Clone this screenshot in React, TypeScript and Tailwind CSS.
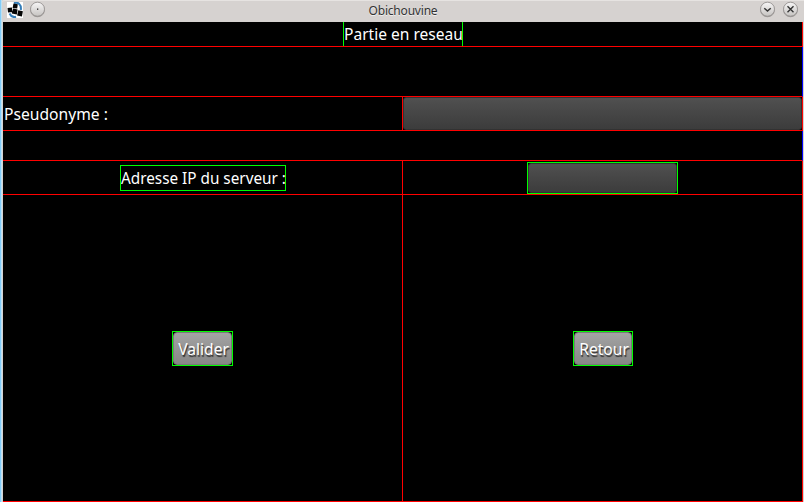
import type { ReactNode } from "react";

function Label({ children, className }: { children: ReactNode; className: string }) {
  return (
    <span className={`block w-max origin-left whitespace-nowrap text-[17px] leading-6 text-white ${className}`}>
      {children}
    </span>
  );
}

function TitleButton({ children }: { children: ReactNode }) {
  return (
    <svg width="17" height="18" viewBox="0 0 17 18" fill="none">
      <defs>
        <linearGradient id="knob" x1="0" y1="0" x2="0" y2="1">
          <stop offset="0" stopColor="#f7f6f6" />
          <stop offset="1" stopColor="#c6c3c1" />
        </linearGradient>
      </defs>
      <circle cx="8.5" cy="9.8" r="7.4" fill="#a09c9a" />
      <circle cx="8.5" cy="9.2" r="7" fill="url(#knob)" stroke="#918d8b" strokeWidth="0.8" />
      {children}
    </svg>
  );
}

function Logo() {
  return (
    <svg width="16" height="16" viewBox="0 0 16 16" className="bg-white">
      <path d="M7 1C11-.4 14.600 2.500 13.800 8" fill="none" stroke="#347db8" strokeWidth="2" />
      <path d="M2.500 11.500C4 14.500 6.500 15.500 9 14.800" fill="none" stroke="#347db8" strokeWidth="2" />
      <path d="M6.500 1.500l4.300.7-.6 4.300-4.600-.6zM.5 6l4.500-.4.4 4.300-4.400.6zM6.200 6.500l4.400.9-.8 5.100-5-1zM11.300 8.200l4.600 1-1 5.200-4.800-1z" fill="#050505" />
    </svg>
  );
}

function TitleBar() {
  return (
    <header className="flex h-[22px] items-start justify-between rounded-tl-[3px] border-t border-[#e6e3e1] bg-[#d6d2d0] pl-[5px] pr-[5px]">
      <div className="flex w-20 gap-[6px] pt-px">
        <Logo />
        <div className="-mt-[2px]">
          <TitleButton><rect x="8" y="8.500" width="1.300" height="1.300" fill="#222" /></TitleButton>
        </div>
      </div>
      <h1 className="pt-px font-['Noto_Sans','Open_Sans',sans-serif] text-[12px] leading-[17px] tracking-[-0.2px] text-[#333] [text-shadow:0_1px_0_#eee]">Obichouvine</h1>
      <div className="-mt-px flex w-20 justify-end gap-[6px]">
        <TitleButton><path d="M5.300 8.200l3.200 2.800 3.200-2.800" stroke="#333" strokeWidth="1.500" /></TitleButton>
        <TitleButton><path d="M5.500 6.200l6 6M11.500 6.200l-6 6" stroke="#333" strokeWidth="1.400" /></TitleButton>
      </div>
    </header>
  );
}

function Field({ className }: { className: string }) {
  return <input className={`block rounded-[3px] border border-[#323232] bg-linear-to-b from-[#505050] to-[#3c3c3c] outline-none ${className}`} />;
}

function ActionButton({ children, width }: { children: string; width: string }) {
  return (
    <div className={`h-[35px] border border-[#00ff00] ${width}`}>
      <button className="flex h-full w-full items-center justify-center rounded-[4px] border border-[#777] bg-linear-to-b from-[#a3a3a3] to-[#878787] pl-[3px] pt-[2px] text-white [text-shadow:1px_2px_1px_#333]">
        <span className="scale-x-[0.92] whitespace-nowrap text-[17px] leading-6">{children}</span>
      </button>
    </div>
  );
}

export default function App() {
  return (
    <div className="flex h-[502px] w-[804px] overflow-hidden bg-[#d6d2d0] font-['Noto_Sans','Open_Sans',sans-serif]">
      <div className="w-px bg-[#82cdfa]" />
      <div className="w-px bg-[#bce0f2]" />
      <div className="min-w-0 flex-1">
        <TitleBar />
        <main className="ml-px mr-px bg-black">
          <div className="flex h-[25px] justify-center border-r border-b border-[#ff0000]">
            <div className="w-[120px] border-x border-[#00ff00]">
              <Label className="ml-[0.5px] scale-x-[0.915]">Partie en reseau</Label>
            </div>
          </div>
          <div className="h-[50px] border-r border-b border-r-[#0000ff] border-b-[#ff0000]" />
          <div className="flex h-[34px] border-r border-b border-[#ff0000]">
            <div className="flex w-[400px] items-center border-r border-[#ff0000]">
              <Label className="ml-[0.5px] scale-x-[0.92]">Pseudonyme :</Label>
            </div>
            <Field className="h-[33px] w-[399px]" />
          </div>
          <div className="h-[30px] border-r border-b border-r-[#0000ff] border-b-[#ff0000]" />
          <div className="flex h-[34px] border-r border-b border-[#ff0000]">
            <div className="flex w-[400px] justify-center border-r border-[#ff0000] pt-1">
              <div className="h-[26px] w-[166px] border border-[#00ff00]">
                <Label className="scale-x-[0.9]">Adresse IP du serveur :</Label>
              </div>
            </div>
            <div className="flex flex-1 justify-center pt-px">
              <div className="h-8 w-[151px] border border-[#00ff00]">
                <Field className="h-full w-full" />
              </div>
            </div>
          </div>
          <div className="flex h-[307px] border-r border-b border-[#ff0000]">
            <div className="flex w-[400px] items-center justify-center border-r border-[#ff0000]">
              <ActionButton width="w-[61px]">Valider</ActionButton>
            </div>
            <div className="flex flex-1 items-center justify-center">
              <ActionButton width="w-[60px]">Retour</ActionButton>
            </div>
          </div>
        </main>
      </div>
    </div>
  );
}
